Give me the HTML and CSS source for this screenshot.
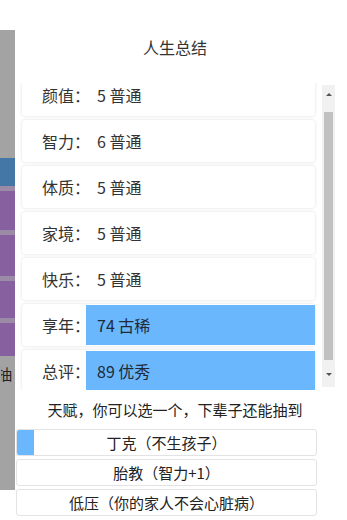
FILE: index.html
```html
<!DOCTYPE html>
<html lang="zh-CN">
<head>
    <meta charset="UTF-8">
    <meta name="viewport" content="width=device-width, initial-scale=1.0">
    <title>人生总结</title>
    <link rel="stylesheet" href="styles.css">
</head>
<body>
    <div class="page">
        <!-- page behind the dialog -->
        <div class="backdrop">
            <div class="seg gray" style="height:128px"></div>
            <div class="seg blue" style="height:28px"></div>
            <div class="seg line"></div>
            <div class="seg purple" style="height:39px"></div>
            <div class="seg line"></div>
            <div class="seg purple" style="height:41px"></div>
            <div class="seg line"></div>
            <div class="seg purple" style="height:37px"></div>
            <div class="seg line"></div>
            <div class="seg purple" style="height:33px"></div>
            <div class="seg gray rest"><span class="cut">抽</span></div>
        </div>

        <div class="dialog">
            <h2 class="title">人生总结</h2>

            <section class="summary">
                <div class="summary-view">
                    <div class="cards">
                        <div class="card"><span class="label">颜值：</span><span class="value">5 普通</span></div>
                        <div class="card"><span class="label">智力：</span><span class="value">6 普通</span></div>
                        <div class="card"><span class="label">体质：</span><span class="value">5 普通</span></div>
                        <div class="card"><span class="label">家境：</span><span class="value">5 普通</span></div>
                        <div class="card"><span class="label">快乐：</span><span class="value">5 普通</span></div>
                        <div class="card"><span class="label">享年：</span><span class="value grade">74 古稀</span></div>
                        <div class="card"><span class="label">总评：</span><span class="value grade">89 优秀</span></div>
                    </div>
                </div>
                <div class="scrollbar">
                    <span class="arrow up"></span>
                    <span class="thumb"></span>
                    <span class="arrow down"></span>
                </div>
            </section>

            <p class="tip">天赋，你可以选一个，下辈子还能抽到</p>

            <div class="talents">
                <button class="talent"><span class="mark"></span>丁克（不生孩子）</button>
                <button class="talent">胎教（智力+1）</button>
                <button class="talent">低压（你的家人不会心脏病）</button>
            </div>
        </div>
    </div>
</body>
</html>
```

FILE: styles.css
```css
body {
    margin: 0;
    padding: 0;
    background: #fff;
    color: #333;
    font-family: "Noto Sans CJK SC", "Noto Sans", sans-serif;
    overflow: hidden;
}
.page {
    display: flex;
    width: 347px;
    height: 520px;
}
.backdrop {
    width: 15px;
    flex-shrink: 0;
    padding-top: 30px;
    display: flex;
    flex-direction: column;
    height: 460px;
}
.seg {
    flex-shrink: 0;
}
.seg.gray {
    background: #a3a3a3;
}
.seg.blue {
    background: #4577a6;
}
.seg.purple {
    background: #87609f;
}
.seg.line {
    height: 5px;
    background: #9b8ba6;
}
.seg.rest {
    flex: 1;
    overflow: hidden;
    position: relative;
}
.cut {
    position: absolute;
    top: 8px;
    right: 3px;
    font-size: 15px;
    line-height: 20px;
    color: #222;
    width: 11px;
    overflow: hidden;
    direction: rtl;
    white-space: nowrap;
}
.dialog {
    width: 320px;
    display: flex;
    flex-direction: column;
}
.title {
    margin: 36px 0 0;
    height: 22px;
    line-height: 22px;
    text-align: center;
    font-size: 16px;
    font-weight: normal;
    color: #333;
}
.summary {
    margin-top: 25px;
    height: 307px;
    display: flex;
    padding-left: 4px;
}
.summary-view {
    width: 300px;
    height: 307px;
    overflow: hidden;
}
.cards {
    margin-top: -9px;
    padding: 0 3px;
    display: flex;
    flex-direction: column;
    gap: 4px;
}
.card {
    height: 42px;
    display: flex;
    align-items: stretch;
    background: #fff;
    border-radius: 3px;
    box-shadow: 0 0 3px rgba(0, 0, 0, 0.14);
    font-size: 16px;
}
.label {
    box-sizing: border-box;
    width: 64px;
    flex-shrink: 0;
    padding-left: 20px;
    display: flex;
    align-items: center;
    white-space: nowrap;
    color: #333;
}
.value {
    flex: 1;
    padding-left: 11px;
    margin: 1px 0;
    display: flex;
    align-items: center;
    color: #333;
}
.value.grade {
    background: #6bb7fd;
    color: #1f2a36;
}
.scrollbar {
    margin: 2px 0 0 4px;
    width: 13px;
    height: 302px;
    background: #f1f1f1;
    display: flex;
    flex-direction: column;
    align-items: center;
}
.arrow {
    width: 0;
    height: 0;
    border-left: 3px solid transparent;
    border-right: 3px solid transparent;
}
.arrow.up {
    margin-top: 8px;
    border-bottom: 3px solid #555;
}
.arrow.down {
    margin-top: 13px;
    border-top: 3px solid #555;
}
.thumb {
    margin-top: 16px;
    width: 9px;
    height: 248px;
    background: #c1c1c1;
}
.tip {
    margin: 9px 0 0;
    height: 22px;
    line-height: 22px;
    text-align: center;
    font-size: 15px;
    color: #222;
}
.talents {
    margin: 8px 0 0 1px;
    width: 301px;
    display: flex;
    flex-direction: column;
    gap: 3px;
}
.talent {
    position: relative;
    height: 27px;
    padding: 0;
    border: 1px solid #e3e3e3;
    border-radius: 3px;
    background: #fff;
    font-family: inherit;
    font-size: 15px;
    color: #222;
    text-align: center;
    overflow: hidden;
}
.mark {
    position: absolute;
    left: 0;
    top: 0;
    bottom: 0;
    width: 17px;
    background: #6bb7fd;
}
```
